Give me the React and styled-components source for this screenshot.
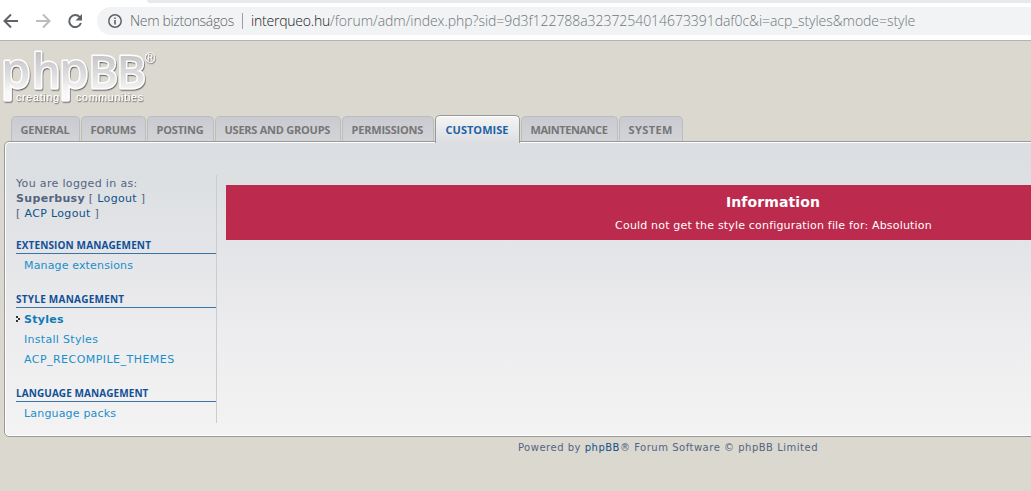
import React from "react";

//styled-components
import styled, { createGlobalStyle } from "styled-components";

const GlobalStyle = createGlobalStyle`
  * {
    box-sizing: border-box;
  }
  html, body {
    margin: 0;
    height: 491px;
    overflow: hidden;
    background-color: #dbd8d0;
  }
`;

const Window = styled.div`
  width: 100%;
  height: 491px;
  overflow: hidden;
  font-family: "DejaVu Sans", Verdana, sans-serif;
  font-size: 11px;
  color: #536482;
`;

const TabStrip = styled.div`
  height: 3px;
  margin-left: 147px;
  border-bottom-left-radius: 4px;
  background-color: #e7eaed;
`;

const Toolbar = styled.div`
  height: 41px;
  display: flex;
  flex-direction: column;
  background-color: #ffffff;
  border-bottom: 1px solid #b5b2b8;
`;

const Controls = styled.div`
  display: flex;
  align-items: center;
  margin-top: 4px;
  height: 28px;

  > svg {
    flex: none;
    margin-right: 12px;
  }
`;

const AddressBar = styled.div`
  flex: 1;
  height: 28px;
  display: flex;
  align-items: center;
  padding-left: 11px;
  border-radius: 14px 0 0 14px;
  background-color: #f1f3f4;
  font: 300 14px/28px "Open Sans", sans-serif;
  white-space: nowrap;

  svg {
    flex: none;
    margin-right: 8px;
  }
`;

const UrlPart = styled.span`
  flex: none;
  width: ${({ width }) => width};
  color: ${({ color }) => color};
  letter-spacing: ${({ spacing }) => spacing}px;
`;

const Divider = styled.span`
  width: 1px;
  height: 16px;
  margin-right: 8px;
  background-color: #9a9da1;
`;

/* the page is wider than the visible window */
const Page = styled.div`
  width: 1336px;
  padding: 0 4px;
`;

const Header = styled.header`
  height: 74px;

  svg {
    display: block;
    margin-left: -4px;
  }
`;

const Tabs = styled.ul`
  list-style: none;
  margin: 0 0 0 7px;
  padding: 0;
  height: 26px;
  display: flex;
  align-items: flex-end;
`;

const Tab = styled.li`
  position: relative;
  width: ${({ width }) => width}px;
  height: ${({ active }) => (active ? 28 : 25)}px;
  margin-right: 1px;
  margin-bottom: ${({ active }) => (active ? -2 : 0)}px;
  padding-top: ${({ active }) => (active ? 1 : 0)}px;
  border: ${({ active }) => (active ? "1px solid #999999" : "1px solid #bdbdbd")};
  border-bottom: 0;
  border-radius: 5px 5px 0 0;
  background: ${({ active }) =>
    active
      ? "linear-gradient(#f4f4f4, #dcdee2)"
      : "linear-gradient(#c9cbd0, #d2d4d8)"};
  box-shadow: ${({ active }) => (active ? "inset 0 1px #ffffff" : "none")};
  color: ${({ active }) => (active ? "#1f63a5" : "#767676")};
  font: bold 11px/26px "Open Sans", sans-serif;
  letter-spacing: ${({ spacing }) => spacing}px;
  padding-left: ${({ active }) => (active ? 9.5 : 8.5)}px;
  white-space: nowrap;
`;

const Panel = styled.main`
  height: 296px;
  display: flex;
  padding: 33px 11px 13px 11px;
  border: 1px solid #999999;
  border-radius: 5px;
  background: linear-gradient(#dbdee2 0%, #dde0e2 14%, #e3e4e7 34%, #ededef 66%, #f3f3f3 100%);
  box-shadow: inset 1px 1px #ffffff, inset 0 -1px #ffffff;
`;

const Sidebar = styled.aside`
  width: 201px;
  height: 248px;
  flex: none;
  border-right: 1px solid #c8cdd2;
`;

const Login = styled.p`
  margin: 1px 0 0;
  height: 62px;
  line-height: 15px;
  letter-spacing: ${({ spacing }) => spacing}px;
`;

const A = styled.a`
  color: #105289;
  text-decoration: none;
`;

const MenuTitle = styled.h2`
  margin: 0;
  height: 16px;
  border-bottom: 1px solid #3a74a6;
  color: #115098;
  font: bold 10px/14px "Open Sans", sans-serif;
  letter-spacing: ${({ spacing }) => spacing}px;
`;

const Menu = styled.ul`
  list-style: none;
  margin: 1px 0 17px;
  padding: 0;
`;

const MenuItem = styled.li`
  height: 20px;
  display: flex;
  align-items: center;
  padding-left: ${({ active }) => (active ? 0 : 8)}px;
  color: ${({ active }) => (active ? "#0f7cb5" : "#1a8fcb")};
  font-weight: ${({ active }) => (active ? "bold" : "normal")};
  letter-spacing: ${({ spacing }) => spacing}px;

  svg {
    margin-right: 4px;
  }
`;

const ErrorBox = styled.div`
  height: 55px;
  flex: 1;
  margin: 10px 0 0 9px;
  background-color: #bc2a4d;
  color: #ffffff;
  text-align: center;

  h3 {
    margin: 0;
    padding-top: 6px;
    font-size: 14px;
    line-height: 22px;
    letter-spacing: 0.1px;
  }

  p {
    margin: 0;
    padding-left: 1px;
    line-height: 26px;
    letter-spacing: 0.18px;
  }
`;

const Footer = styled.footer`
  text-align: center;
  font-size: 10px;
  line-height: 22px;
  letter-spacing: 0.51px;
`;

const tabs = [
  { name: "General", width: 69, spacing: -0.2 },
  { name: "Forums", width: 65, spacing: -0.25 },
  { name: "Posting", width: 67, spacing: -0.25 },
  { name: "Users and groups", width: 126, spacing: -0.24 },
  { name: "Permissions", width: 92, spacing: -0.2 },
  { name: "Customise", width: 85, spacing: 0.03 },
  { name: "Maintenance", width: 97, spacing: -0.44 },
  { name: "System", width: 64, spacing: 0.4 },
];

const menus = [
  {
    title: "EXTENSION MANAGEMENT",
    spacing: 0.13,
    items: [{ name: "Manage extensions", spacing: 0.15 }],
  },
  {
    title: "STYLE MANAGEMENT",
    spacing: 0.24,
    items: [
      { name: "Styles", spacing: 0.3, active: true },
      { name: "Install Styles", spacing: 0.3 },
      { name: "ACP_RECOMPILE_THEMES", spacing: 0.46 },
    ],
  },
  {
    title: "LANGUAGE MANAGEMENT",
    spacing: 0.08,
    items: [{ name: "Language packs", spacing: 0.18 }],
  },
];

const letters = [
  { char: "p", x: 1, size: 49, scale: 0.97 },
  { char: "h", x: 32, size: 47, scale: 0.96 },
  { char: "p", x: 59, size: 49, scale: 0.97 },
  { char: "B", x: 88.5, size: 46, scale: 0.97 },
  { char: "B", x: 116.5, size: 46, scale: 0.97 },
];

const Logo = () => (
  <svg width="165" height="72" viewBox="0 41 165 72">
    <defs>
      <linearGradient id="silver" gradientUnits="userSpaceOnUse" x1="0" y1="-36" x2="0" y2="4">
        <stop offset="0" stopColor="#c2c2c4" />
        <stop offset="0.55" stopColor="#dcdcde" />
        <stop offset="1" stopColor="#f8f8f8" />
      </linearGradient>
      <filter id="shade" x="-10%" y="-10%" width="120%" height="130%">
        <feDropShadow dx="0.7" dy="1.2" stdDeviation="0.6" floodColor="#555555" floodOpacity="0.85" />
      </filter>
    </defs>
    <g
      filter="url(#shade)"
      fontFamily="Open Sans, sans-serif"
      fontWeight="600"
      fill="url(#silver)"
      stroke="#ffffff"
      strokeWidth="3"
      strokeLinejoin="round"
      paintOrder="stroke"
    >
      {letters.map(({ char, x, size, scale }) => (
        <text key={x} transform={`translate(${x} 88) scale(${scale} 1)`} fontSize={size}>
          {char}
        </text>
      ))}
    </g>
    <g filter="url(#shade)" fill="#ffffff" fontFamily="Liberation Sans, sans-serif">
      <text x="16" y="101" fontSize="10.5" textLength="43">creating</text>
      <text x="76" y="101" fontSize="10.5" textLength="67">communities</text>
      <text x="145" y="63" fontSize="14">®</text>
    </g>
  </svg>
);

const App = () => {
  return (
    <Window>
      <GlobalStyle />
      <Toolbar>
        <TabStrip />
        <Controls>
          <svg width="20" height="20" viewBox="0 0 20 20" fill="none" stroke="#5f6368" strokeWidth="2">
            <path d="M18 10H5M11 3.5L4.5 10l6.5 6.5" />
          </svg>
          <svg width="20" height="20" viewBox="0 0 20 20" fill="none" stroke="#babcbe" strokeWidth="2">
            <path d="M4 10h13M11 3.5l6.5 6.5-6.5 6.5" />
          </svg>
          <svg width="21" height="20" viewBox="0 0 21 20" fill="none" stroke="#5f6368" strokeWidth="2">
            <path d="M15.8 6.2A6 6 0 1 0 16.9 12" />
            <path d="M18 3v6.5h-6.5z" fill="#5f6368" stroke="none" />
          </svg>
          <AddressBar>
            <svg width="14" height="14" viewBox="0 0 14 14" fill="none" stroke="#5f6368">
              <circle cx="7" cy="7" r="6.2" strokeWidth="1.5" />
              <path d="M7 6v4.5M7 3.5V5" strokeWidth="1.6" />
            </svg>
            <UrlPart width="112px" color="#5f6368" spacing={-0.33}>
              Nem biztonságos
            </UrlPart>
            <Divider />
            <UrlPart color="#202124" spacing={-0.22}>interqueo.hu</UrlPart>
            <UrlPart color="#70757a" spacing={-0.05}>
              /forum/adm/index.php?sid=9d3f122788a3237254014673391daf0c&amp;i=acp_styles&amp;mode=style
            </UrlPart>
          </AddressBar>
        </Controls>
      </Toolbar>
      <Page>
        <Header>
          <Logo />
        </Header>
        <Tabs>
          {tabs.map(({ name, width, spacing }) => (
            <Tab key={name} width={width} spacing={spacing} active={name === "Customise" ? 1 : 0}>
              {name.toUpperCase()}
            </Tab>
          ))}
        </Tabs>
        <Panel>
          <Sidebar>
            <Login spacing={0.34}>
              You are logged in as:
              <br />
              <strong>Superbusy</strong> [ <A>Logout</A> ]
              <br />
              [ <A>ACP Logout</A> ]
            </Login>
            {menus.map(({ title, spacing, items }) => (
              <React.Fragment key={title}>
                <MenuTitle spacing={spacing}>{title}</MenuTitle>
                <Menu>
                  {items.map((item) => (
                    <MenuItem key={item.name} spacing={item.spacing} active={item.active ? 1 : 0}>
                      {item.active && (
                        <svg width="4" height="6" viewBox="0 0 4 6" fill="#333333">
                          <path d="M0 0h2v2h2v2H2v2H0V4h2V2H0z" />
                        </svg>
                      )}
                      {item.name}
                    </MenuItem>
                  ))}
                </Menu>
              </React.Fragment>
            ))}
          </Sidebar>
          <ErrorBox>
            <h3>Information</h3>
            <p>Could not get the style configuration file for: Absolution</p>
          </ErrorBox>
        </Panel>
        <Footer>
          Powered by <A>phpBB</A>® Forum Software © phpBB Limited
        </Footer>
      </Page>
    </Window>
  );
};

export default App;
